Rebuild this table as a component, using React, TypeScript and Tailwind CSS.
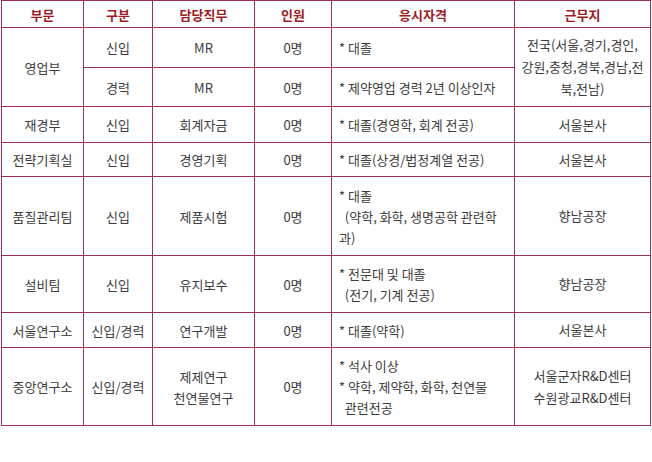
import React from 'react';

type Row = {
  dept?: string;
  deptRows?: number;
  kind: string;
  job: string[];
  count: string;
  qual: string[];
  place?: string[];
  placeRows?: number;
  h: string;
};

const rows: Row[] = [
  { dept: '영업부', deptRows: 2, kind: '신입', job: ['MR'], count: '0명', qual: ['* 대졸'], place: ['전국(서울,경기,경인,', '강원,충청,경북,경남,전', '북,전남)'], placeRows: 2, h: 'h-[40px]' },
  { kind: '경력', job: ['MR'], count: '0명', qual: ['* 제약영업 경력 2년 이상인자'], h: 'h-[39px]' },
  { dept: '재경부', kind: '신입', job: ['회계자금'], count: '0명', qual: ['* 대졸(경영학, 회계 전공)'], place: ['서울본사'], h: 'h-[36px]' },
  { dept: '전략기획실', kind: '신입', job: ['경영기획'], count: '0명', qual: ['* 대졸(상경/법정계열 전공)'], place: ['서울본사'], h: 'h-[34px]' },
  { dept: '품질관리팀', kind: '신입', job: ['제품시험'], count: '0명', qual: ['* 대졸', '\u00a0\u00a0(약학, 화학, 생명공학 관련학', '과)'], place: ['향남공장'], h: 'h-[79px]' },
  { dept: '설비팀', kind: '신입', job: ['유지보수'], count: '0명', qual: ['* 전문대 및 대졸', '\u00a0\u00a0(전기, 기계 전공)'], place: ['향남공장'], h: 'h-[57px]' },
  { dept: '서울연구소', kind: '신입/경력', job: ['연구개발'], count: '0명', qual: ['* 대졸(약학)'], place: ['서울본사'], h: 'h-[35px]' },
  { dept: '중앙연구소', kind: '신입/경력', job: ['제제연구', '천연물연구'], count: '0명', qual: ['* 석사 이상', '* 약학, 제약학, 화학, 천연물', '\u00a0\u00a0관련전공'], place: ['서울군자R&D센터', '수원광교R&D센터'], h: 'h-[78px]' },
];

const cell = 'border border-[#9e3152] text-center align-middle';

function Lines({ items }: { items: string[] }) {
  return (
    <>
      {items.map((t, i) => (
        <div key={i} className="whitespace-nowrap">{t}</div>
      ))}
    </>
  );
}

export default function App() {
  return (
    <div className="w-[652px] h-[462px] bg-white pl-px" style={{ fontFamily: '"Noto Sans CJK KR", "Liberation Sans", sans-serif' }}>
      <table className="table-fixed border-collapse w-[649px] text-[13px] leading-[21px] text-[#3c3c3c]">
        <colgroup>
          <col className="w-[82px]" />
          <col className="w-[69px]" />
          <col className="w-[102px]" />
          <col className="w-[77px]" />
          <col className="w-[183px]" />
          <col className="w-[136px]" />
        </colgroup>
        <thead>
          <tr className="h-[27px] text-[#9b1c24] font-bold text-[13px]">
            <th className={cell}>부문</th>
            <th className={cell}>구분</th>
            <th className={cell}>담당직무</th>
            <th className={cell}>인원</th>
            <th className={cell}>응시자격</th>
            <th className={cell}>근무지</th>
          </tr>
        </thead>
        <tbody>
          {rows.map((r, i) => (
            <tr key={i} className={r.h}>
              {r.dept && (
                <td className={cell} rowSpan={r.deptRows ?? 1}>{r.dept}</td>
              )}
              <td className={cell}>{r.kind}</td>
              <td className={cell}><Lines items={r.job} /></td>
              <td className={cell}>{r.count}</td>
              <td className="border border-[#9e3152] align-middle text-left pl-[7px]">
                <Lines items={r.qual} />
              </td>
              {r.place && (
                <td className={cell + ' leading-[22px]'} rowSpan={r.placeRows ?? 1}>
                  <Lines items={r.place} />
                </td>
              )}
            </tr>
          ))}
        </tbody>
      </table>
    </div>
  );
}
